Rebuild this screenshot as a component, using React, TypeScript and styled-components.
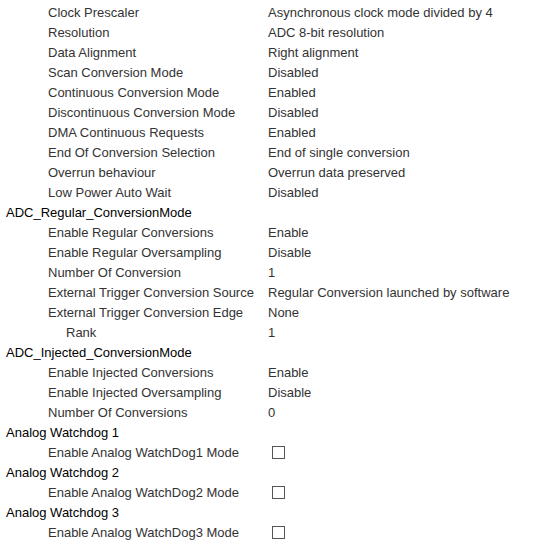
import React from "react";
import styled, { createGlobalStyle } from "styled-components";

const Global = createGlobalStyle`
  html, body { margin: 0; padding: 0; background: #ffffff; }
  body { font-family: "Liberation Sans", Arial, sans-serif; font-size: 13px; }
`;

const Tree = styled.div`
  display: flex;
  flex-direction: column;
  padding-top: 3px;
  width: 540px;
`;

const Row = styled.div`
  display: grid;
  grid-template-columns: 268px 1fr;
  align-items: center;
  height: 20px;
  line-height: 20px;
  white-space: nowrap;
`;

const Label = styled.span<{ $level: number }>`
  padding-left: ${(p) => (p.$level === 0 ? 6 : p.$level === 1 ? 48 : 66)}px;
  color: ${(p) => (p.$level === 0 ? "#000000" : "#333333")};
`;

const Value = styled.span`
  color: #333333;
  display: flex;
  align-items: center;
`;

const Check = styled.span`
  display: inline-block;
  box-sizing: border-box;
  width: 13px;
  height: 13px;
  margin-left: 4px;
  margin-top: -1px;
  border: 1px solid #555555;
  background: #ffffff;
`;

type Item = { label: string; level: number; value?: string; check?: boolean };

const items: Item[] = [
  { label: "Clock Prescaler", level: 1, value: "Asynchronous clock mode divided by 4" },
  { label: "Resolution", level: 1, value: "ADC 8-bit resolution" },
  { label: "Data Alignment", level: 1, value: "Right alignment" },
  { label: "Scan Conversion Mode", level: 1, value: "Disabled" },
  { label: "Continuous Conversion Mode", level: 1, value: "Enabled" },
  { label: "Discontinuous Conversion Mode", level: 1, value: "Disabled" },
  { label: "DMA Continuous Requests", level: 1, value: "Enabled" },
  { label: "End Of Conversion Selection", level: 1, value: "End of single conversion" },
  { label: "Overrun behaviour", level: 1, value: "Overrun data preserved" },
  { label: "Low Power Auto Wait", level: 1, value: "Disabled" },
  { label: "ADC_Regular_ConversionMode", level: 0 },
  { label: "Enable Regular Conversions", level: 1, value: "Enable" },
  { label: "Enable Regular Oversampling", level: 1, value: "Disable" },
  { label: "Number Of Conversion", level: 1, value: "1" },
  { label: "External Trigger Conversion Source", level: 1, value: "Regular Conversion launched by software" },
  { label: "External Trigger Conversion Edge", level: 1, value: "None" },
  { label: "Rank", level: 2, value: "1" },
  { label: "ADC_Injected_ConversionMode", level: 0 },
  { label: "Enable Injected Conversions", level: 1, value: "Enable" },
  { label: "Enable Injected Oversampling", level: 1, value: "Disable" },
  { label: "Number Of Conversions", level: 1, value: "0" },
  { label: "Analog Watchdog 1", level: 0 },
  { label: "Enable Analog WatchDog1 Mode", level: 1, check: true },
  { label: "Analog Watchdog 2", level: 0 },
  { label: "Enable Analog WatchDog2 Mode", level: 1, check: true },
  { label: "Analog Watchdog 3", level: 0 },
  { label: "Enable Analog WatchDog3 Mode", level: 1, check: true },
];

export default function App() {
  return (
    <>
      <Global />
      <Tree>
        {items.map((it, i) => (
          <Row key={i}>
            <Label $level={it.level}>{it.label}</Label>
            <Value>{it.check ? <Check /> : it.value}</Value>
          </Row>
        ))}
      </Tree>
    </>
  );
}
